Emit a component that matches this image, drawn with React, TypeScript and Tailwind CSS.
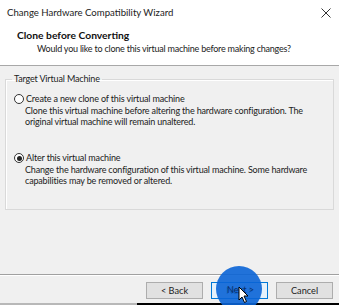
import React from "react";

const font = { fontFamily: 'Lato, "Noto Sans", Arial, sans-serif' };

export default function App() {
  return (
    <div className="relative w-[339px] h-[305px] overflow-hidden bg-[#f0f0f0] text-[#1a1a1a] flex flex-col" style={font}>
      {/* title bar */}
      <div className="h-[26px] bg-white flex items-center justify-between pl-[7px] pr-[7px] shrink-0">
        <span className="text-[9.6px] leading-none text-[#222] whitespace-nowrap">Change Hardware Compatibility Wizard</span>
        <svg width="10" height="10" viewBox="0 0 10 10" className="mr-[1px]">
          <path d="M0.5 0.5 L9.5 9.5 M9.5 0.5 L0.5 9.5" stroke="#333" strokeWidth="1" />
        </svg>
      </div>
      {/* header */}
      <div className="h-[40px] bg-white shrink-0 border-b border-[#a8a8a8] pl-[17px] pt-[2px]">
        <div className="text-[10.3px] font-bold leading-[14px] text-[#111] whitespace-nowrap">Clone before Converting</div>
        <div className="text-[9px] tracking-[-0.22px] leading-[14px] pl-[20px] text-[#222] whitespace-nowrap">Would you like to clone this virtual machine before making changes?</div>
      </div>
      {/* body */}
      <div className="flex-1 flex flex-col">
        <div className="px-[5px] pt-[7px] h-[208px] shrink-0">
          <fieldset className="border border-[#d9d9d9] h-[137px] pl-[8px] pr-[4px] shadow-[inset_1px_1px_0_#fff]">
            <legend className="text-[9px] tracking-[-0.15px] leading-[12px] px-[2px] ml-[-2px] text-[#222] whitespace-nowrap">Target Virtual Machine</legend>
            <div className="mt-[8px] flex items-center gap-[2px]">
              <span className="w-[10px] h-[10px] rounded-full border border-[#333] bg-white inline-block" />
              <span className="text-[9px] tracking-[-0.15px] leading-[12px] whitespace-nowrap">Create a new clone of this virtual machine</span>
            </div>
            <div className="pl-[11px] text-[9px] tracking-[-0.17px] leading-[11px] text-[#222] whitespace-nowrap">
              Clone this virtual machine before altering the hardware configuration. The<br />original virtual machine will remain unaltered.
            </div>
            <div className="mt-[25px] flex items-center gap-[2px]">
              <span className="w-[10px] h-[10px] rounded-full border border-[#333] bg-white inline-flex items-center justify-center">
                <span className="w-[5px] h-[5px] rounded-full bg-[#222]" />
              </span>
              <span className="text-[9px] tracking-[-0.15px] leading-[12px] whitespace-nowrap">Alter this virtual machine</span>
            </div>
            <div className="pl-[11px] text-[9px] tracking-[-0.17px] leading-[11px] text-[#222] whitespace-nowrap">
              Change the hardware configuration of this virtual machine. Some hardware<br />capabilities may be removed or altered.
            </div>
          </fieldset>
        </div>
        <div className="flex-1" />
        <div className="border-t border-[#a0a0a0] shadow-[inset_0_1px_0_#fff] h-[29px] shrink-0 flex items-center justify-end gap-[8px] pr-[6px] pt-[3px]">
          <div className="w-[57px] h-[17px] border border-[#adadad] bg-[#e1e1e1] flex items-center justify-center text-[9.2px] text-[#222]">&lt; Back</div>
          <div className="w-[57px] h-[17px] border border-[#0078d7] bg-[#e5f1fb] flex items-center justify-center text-[9.2px] text-[#222]">Next &gt;</div>
          <div className="w-[57px] h-[17px] border border-[#adadad] bg-[#e1e1e1] flex items-center justify-center text-[9.2px] text-[#222]">Cancel</div>
        </div>
        <div className="h-[3px] shrink-0 flex">
          <div className="w-[137px] bg-[#b8b8b8]" />
          <div className="flex-1 bg-black" />
        </div>
      </div>
      {/* click highlight */}
      <div className="absolute left-[216px] top-[266px] w-[46px] h-[46px] rounded-full bg-[#0a64d6]/90" />
      <div className="absolute left-[212px] top-[281px] w-[57px] h-[17px] flex items-center justify-center text-[9.2px] text-[#0b2f6a]" style={font}>Next &gt;</div>
      <svg className="absolute left-[238px] top-[286px]" width="12" height="18" viewBox="0 0 12 18">
        <path d="M1 1 L1 14 L4 11 L6.5 16.5 L8.5 15.5 L6 10 L10 10 Z" fill="white" stroke="black" strokeWidth="1" />
      </svg>
    </div>
  );
}
